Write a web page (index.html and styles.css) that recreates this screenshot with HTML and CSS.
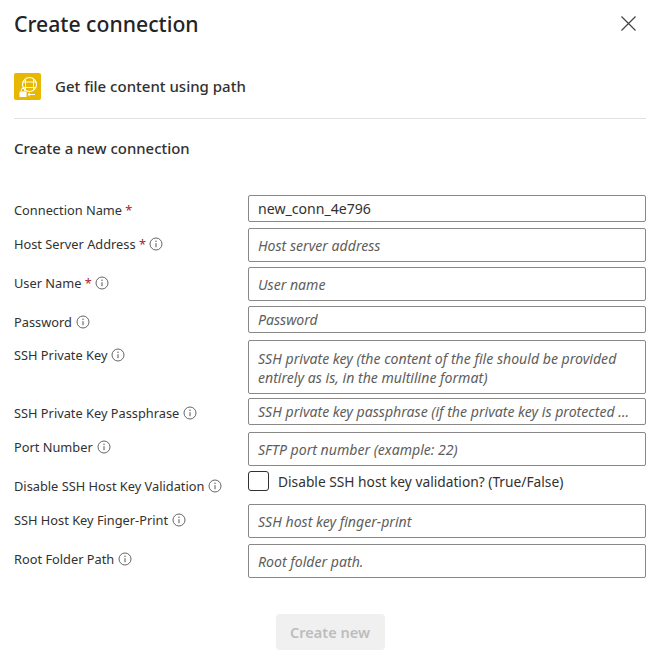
FILE: index.html
```html
<!DOCTYPE html>
<html lang="en">
<head>
<meta charset="utf-8">
<title>Create connection</title>
<link rel="stylesheet" href="styles.css">
</head>
<body>
<div class="panel">
  <header class="top">
    <h1>Create connection</h1>
    <svg class="close" viewBox="0 0 16 16" width="16" height="16"><path d="M0.5 0.5 L15.5 15.5 M15.5 0.5 L0.5 15.5" stroke="#444" stroke-width="1.3" fill="none"/></svg>
  </header>
  <div class="tool">
    <span class="tool-icon">
      <svg viewBox="0 0 27 27" width="27" height="27">
        <circle cx="15.5" cy="11.5" r="7" fill="none" stroke="#fff" stroke-width="1.1"/>
        <path d="M11.5 6.5V16.5M19.5 6.5V16.5M8.8 9H22.2M8.8 14.5H22.2" stroke="#fff" stroke-width="0.9" fill="none"/>
        <path d="M14 21.5H21M14 21.5l2-1.7M14 21.5l2 1.7" stroke="#fff" stroke-width="1" fill="none"/>
        <rect x="5.5" y="18.5" width="7" height="5.5" rx="0.6" fill="#fff"/>
        <path d="M7.2 18.5v-1.4a1.8 1.8 0 0 1 3.6 0v1.4" stroke="#fff" stroke-width="1" fill="none"/>
      </svg>
    </span>
    <span class="tool-name">Get file content using path</span>
  </div>
  <h2>Create a new connection</h2>
  <form class="form">
    <div class="row g6"><label class="lab">Connection Name <i class="req">*</i></label><input class="field h27 val" value="new_conn_4e796"></div>
    <div class="row g5"><label class="lab low">Host Server Address <i class="req">*</i> <svg class="info" viewBox="0 0 14 14"><use href="#i"/></svg></label><input class="field h34" placeholder="Host server address"></div>
    <div class="row g5"><label class="lab low">User Name <i class="req">*</i> <svg class="info" viewBox="0 0 14 14"><use href="#i"/></svg></label><input class="field h34" placeholder="User name"></div>
    <div class="row g7"><label class="lab low">Password <svg class="info" viewBox="0 0 14 14"><use href="#i"/></svg></label><input class="field h27" placeholder="Password"></div>
    <div class="row g4"><label class="lab">SSH Private Key <svg class="info" viewBox="0 0 14 14"><use href="#i"/></svg></label><textarea class="field area" placeholder="SSH private key (the content of the file should be provided entirely as is, in the multiline format)"></textarea></div>
    <div class="row g7"><label class="lab">SSH Private Key Passphrase <svg class="info" viewBox="0 0 14 14"><use href="#i"/></svg></label><input class="field h27" placeholder="SSH private key passphrase (if the private key is protected by a passphrase)"></div>
    <div class="row g6"><label class="lab">Port Number <svg class="info" viewBox="0 0 14 14"><use href="#i"/></svg></label><input class="field h34" placeholder="SFTP port number (example: 22)"></div>
    <div class="row g8"><label class="lab high">Disable SSH Host Key Validation <svg class="info" viewBox="0 0 14 14"><use href="#i"/></svg></label><div class="check"><span class="box"></span><span class="check-text">Disable SSH host key validation? (True/False)</span></div></div>
    <div class="row g6"><label class="lab low">SSH Host Key Finger-Print <svg class="info" viewBox="0 0 14 14"><use href="#i"/></svg></label><input class="field h34" placeholder="SSH host key finger-print"></div>
    <div class="row"><label class="lab">Root Folder Path <svg class="info" viewBox="0 0 14 14"><use href="#i"/></svg></label><input class="field h34" placeholder="Root folder path."></div>
  </form>
  <div class="actions"><button class="create" type="button" disabled>Create new</button></div>
</div>
<svg class="defs" width="0" height="0"><defs><g id="i"><circle cx="7" cy="7" r="6" fill="none" stroke="#555" stroke-width="0.9"/><path d="M7 6.2V10.2" stroke="#555" stroke-width="1"/><circle cx="7" cy="4.3" r="0.7" fill="#555"/></g></defs></svg>
</body>
</html>
```
FILE: styles.css
```css
* { box-sizing: border-box; }
html, body { margin: 0; padding: 0; background: #fff; }
body { width: 665px; height: 665px; overflow: hidden; font-family: "Noto Sans", "Open Sans", sans-serif; color: #323130; }
.panel { padding: 0 19px 0 14px; }
.top { display: flex; justify-content: space-between; align-items: center; height: 47px; }
h1 { margin: 0; font-size: 21.2px; font-weight: 500; color: #242424; }
.close { margin-right: 10px; width: 15px; height: 15px; }
.tool { display: flex; align-items: center; gap: 14px; margin-top: 26px; height: 27px; }
.tool-icon { width: 27px; height: 27px; background: #e8b800; border-radius: 2px; display: block; }
.tool-icon svg { display: block; }
.tool-name { font-size: 15px; font-weight: 500; color: #323130; margin-top: -2px; }
h2 { margin: 18px 0 0; padding-top: 19px; border-top: 1px solid #e1e1e1; font-size: 14.9px; font-weight: 500; line-height: 20px; color: #323130; }
.form { margin-top: 37px; }
.row { display: flex; align-items: flex-start; }
.g4 { margin-bottom: 4px; }
.g5 { margin-bottom: 5px; }
.g6 { margin-bottom: 6px; }
.g7 { margin-bottom: 7px; }
.g8 { margin-bottom: 8px; }
.lab { width: 234px; flex: none; font-size: 12.8px; line-height: 20px; padding-top: 5px; color: #323130; white-space: nowrap; }
.low { padding-top: 6px; }
.high { padding-top: 4px; }
.req { color: #a4262c; font-style: normal; margin-right: -1px; }
.info { width: 14px; height: 14px; vertical-align: -2px; margin-left: 0.5px; }
.field { flex: 1; min-width: 0; display: block; border: 1px solid #8a8886; border-radius: 2px; padding: 0 9px; font-family: inherit; font-size: 14.1px; color: #323130; background: #fff; outline: none; text-overflow: ellipsis; }
.field::placeholder { color: #605e5c; font-style: italic; opacity: 1; }
.h27 { height: 27px; }
.h34 { height: 34px; }
.area { height: 54px; padding: 8px 9px; line-height: 19px; resize: none; overflow: hidden; }
.check { display: flex; align-items: center; gap: 9px; flex: 1; height: 20px; margin-top: -1px; }
.box { width: 21px; height: 20px; border: 1px solid #323130; border-radius: 3px; flex: none; }
.check-text { font-size: 13.75px; }
.actions { display: flex; justify-content: center; margin-top: 36px; }
.create { width: 109px; height: 36px; border: 0; border-radius: 4px; background: #f0f0f0; color: #bdbdbd; font-family: inherit; font-size: 14.5px; font-weight: 600; }
.defs { position: absolute; }
```
